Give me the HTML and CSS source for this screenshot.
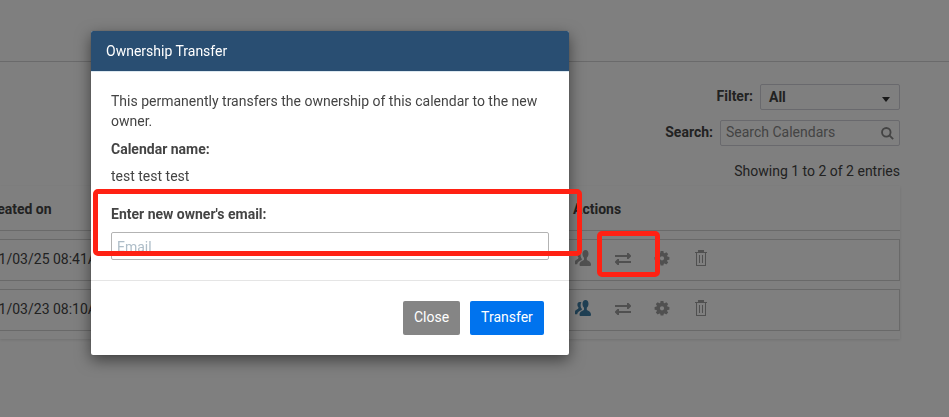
FILE: index.html
```html
<!DOCTYPE html>
<html lang="en">
<head>
<meta charset="utf-8">
<title>Calendars</title>
<link rel="stylesheet" href="styles.css">
</head>
<body>
<svg class="sprite" aria-hidden="true">
  <symbol id="users" viewBox="0 0 16 16">
    <path d="M4.800 2C3.200 1.900 2.400 3 2.400 4.500c0 1.300.4 2.200 1 2.700v1.100C3.200 9.200 0 9.900 0 12v2.300h2.200c.3-2.200 2-3.200 4.600-4.300V8.800C5.700 7.500 5.500 5.900 5.700 4.200c.1-.8.300-1.400.7-1.800C6 2.100 5.400 2 4.800 2z"/>
    <path d="M10.600 0C8.700 0 7.500 1.400 7.500 3.700c0 1.800.6 3.200 1.500 4v2C8.500 10.700 4.500 11 4.500 14.500c0 1 .4 1.500 1.300 1.500h8.900c.9 0 1.300-.5 1.300-1.500 0-3.500-3.700-3.800-4.200-4.800v-2c1-.8 1.700-2.200 1.700-4C13.500 1.400 12.400 0 10.600 0z"/>
  </symbol>
  <symbol id="swap" viewBox="0 0 16 16">
    <path d="M0 5h12V3h1.500L16 5.500V6.500L13.500 9H12V7H0zM16 11v2H4v2H2.500L0 12.500v-1L2.500 9H4v2z"/>
  </symbol>
  <symbol id="gear" viewBox="0 0 16 16">
    <path fill-rule="evenodd" d="M6.600 1h2.800l.4 2 .8.300 1.700-1.100 1.900 1.900L13.100 5.800l.3.800 2 .4v2.700l-2 .4-.3.900 1.100 1.600-1.900 1.900-1.700-1.100-.8.300-.4 1.900H6.600l-.4-1.900-.8-.3-1.700 1.100-1.900-1.900L2.900 11l-.3-.9-2-.4V7l2-.4.3-.8-1.100-1.700 1.900-1.900 1.700 1.100.8-.3zM8 6.200a2.100 2.100 0 1 0 0 4.200 2.100 2.100 0 0 0 0-4.200z"/>
  </symbol>
  <symbol id="trash" viewBox="0 0 16 16">
    <path d="M5 0h6v2h3v1h-1v13H3V3H2V2h3zM4 3v12h8V3zM6 5h1v8H6zM9 5h1v8H9z"/>
  </symbol>
</svg>

<div class="page">
  <header class="topbar"></header>
  <main class="content">
    <div class="controls">
      <div class="control"><span class="control-label">Filter:</span><div class="field select"><span>All</span><i class="caret"></i></div></div>
      <div class="control"><span class="control-label">Search:</span><div class="field search"><span>Search Calendars</span>
        <svg class="magnifier" viewBox="0 0 14 14"><circle cx="5.700" cy="5.700" r="4.600"/><path d="M9.100 9.100l4 4"/></svg></div></div>
      <div class="summary">Showing 1 to 2 of 2 entries</div>
    </div>
    <section class="table">
      <div class="table-head"><span class="created">Created on</span><span>Actions</span></div>
      <div class="row">
        <span class="created">2021/03/25 08:41AM</span>
        <div class="actions"><svg><use href="#users"/></svg><svg><use href="#swap"/></svg><svg><use href="#gear"/></svg><svg><use href="#trash"/></svg></div>
      </div>
      <div class="row">
        <span class="created">2021/03/23 08:10AM</span>
        <div class="actions"><svg class="shared"><use href="#users"/></svg><svg><use href="#swap"/></svg><svg><use href="#gear"/></svg><svg><use href="#trash"/></svg></div>
      </div>
    </section>
  </main>
</div>

<div class="backdrop"></div>
<div class="modal">
  <div class="modal-head">Ownership Transfer</div>
  <div class="modal-body">
    <p>This permanently transfers the ownership of this calendar to the new owner.</p>
    <p class="strong">Calendar name:</p>
    <p>test test test</p>
    <p class="strong email-label">Enter new owner's email:</p>
    <input class="email" type="text" placeholder="Email">
  </div>
  <div class="modal-foot"><button class="btn">Close</button><button class="btn primary">Transfer</button></div>
</div>
<div class="mark mark-email"></div>
<div class="mark mark-transfer"></div>
</body>
</html>
```
FILE: styles.css
```css
* { box-sizing: border-box; }
body { margin: 0; height: 417px; overflow: hidden; background: #fff; color: #444; font: 14px/20px Roboto, sans-serif; }
.sprite { position: absolute; width: 0; height: 0; }
.page { height: 417px; overflow: hidden; }
.topbar { height: 62px; border-bottom: 1px solid #d4d4d6; }
.content { width: 900px; padding-top: 22px; }
.controls { display: flex; flex-direction: column; align-items: flex-end; gap: 10px; }
.control { display: flex; align-items: center; }
.control-label { font-weight: 700; margin-right: 7px; position: relative; top: -1px; }
.field { display: flex; align-items: center; justify-content: space-between; height: 26px; border: 1px solid #d2d2da; border-radius: 2px; }
.select { width: 140px; padding: 0 9px 0 8px; font-weight: 700; }
.caret { margin-top: 4px; border: 4px solid transparent; border-top: 5px solid #333; border-bottom: 0; }
.search { width: 180px; padding: 0 5px; color: #888; line-height: 22px; }
.search span { position: relative; top: -1px; }
.magnifier { width: 13px; height: 13px; fill: none; stroke: #888; stroke-width: 2; }
.summary { margin-top: 5px; }
.table { margin-top: 5px; height: 153px; box-shadow: 0 1px 3px rgba(0, 0, 0, .12); }
.table-head { display: flex; align-items: center; height: 45px; border-bottom: 1px solid #d4d4d4; font-weight: 700; }
.table-head span { position: relative; top: 1px; }
.table-head .created { width: 590px; margin-left: -17px; }
.row { display: flex; align-items: center; height: 42px; margin-top: 8px; border: 1px solid #d2d2d2; border-left: 0; }
.created { flex: none; width: 600px; margin-left: -25px; white-space: nowrap; }
.row .created { margin-top: -2px; }
.actions { display: flex; gap: 23px; margin-top: -4px; }
.actions svg { width: 16px; height: 16px; fill: #a0a0a0; }
.actions svg:first-child { margin-right: 1px; }
.actions .shared { fill: #4080a8; }
.backdrop { position: fixed; inset: 0; background: rgba(0, 0, 0, .5); }
.modal { position: absolute; left: 91px; top: 31px; width: 478px; height: 324px; background: #fff; border-radius: 2px; box-shadow: 0 0 1px rgba(0, 0, 0, .4), 0 5px 15px rgba(0, 0, 0, .5); overflow: hidden; }
.modal-head { height: 41px; padding: 10px 15px; background: #294e72; background-clip: padding-box; border-bottom: 1px solid #dce8f0; color: #fff; }
.modal-body { height: 209px; padding: 19px 20px 0; border-bottom: 1px solid #e5e5e5; }
.modal-body p { margin: 0 0 8px; }
.modal-body p:nth-child(3) { margin-top: -1px; }
.strong { font-weight: 700; }
.modal-body .email-label { margin: 18px 0 8px; }
.email { display: block; width: 438px; height: 28px; padding: 1px 5px 0; border: 1px solid #b3b3b3; border-radius: 2px; font: 14px Roboto, sans-serif; }
.email::placeholder { color: #aebdc8; }
.modal-foot { display: flex; justify-content: flex-end; gap: 10px; padding: 20px 25px; }
.btn { width: 57px; height: 34px; padding: 0 0 2px; border: 0; border-radius: 2px; background: #858585; color: #fff; font: 14px Roboto, sans-serif; }
.primary { width: 74px; background: #0073ee; }
.mark { position: absolute; border: 5px solid #ff2113; border-radius: 5px; }
.mark-email { left: 93px; top: 189px; width: 489px; height: 67px; }
.mark-transfer { left: 597px; top: 231px; width: 63px; height: 46px; }
```
